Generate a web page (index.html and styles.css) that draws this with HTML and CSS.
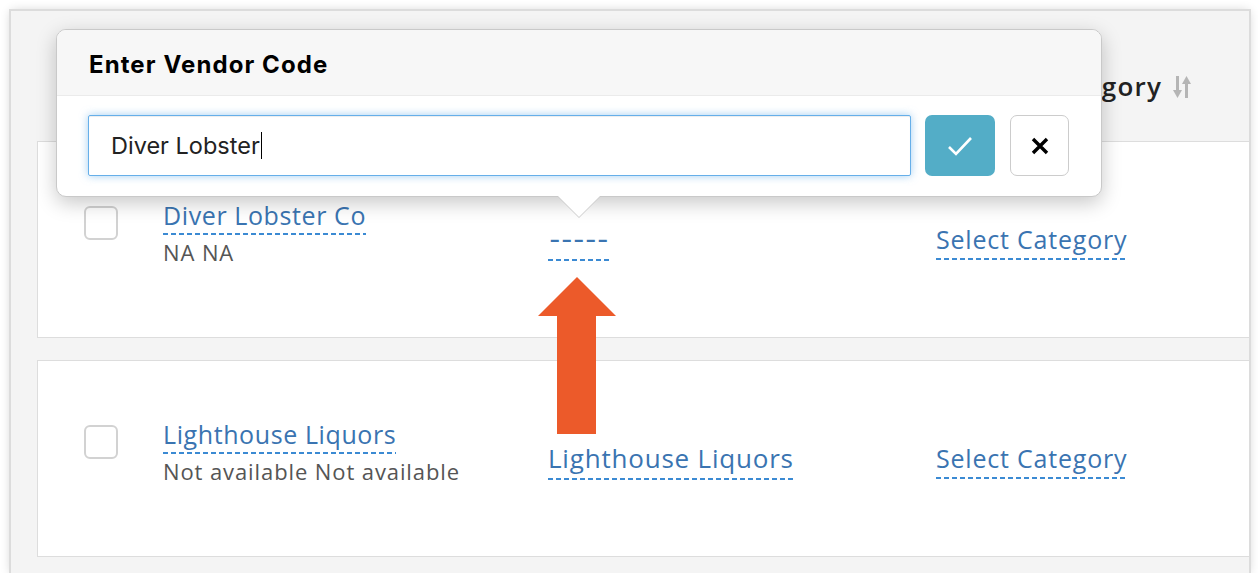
FILE: index.html
```html
<!DOCTYPE html>
<html lang="en">
<head>
  <meta charset="UTF-8">
  <meta name="viewport" content="width=device-width, initial-scale=1.0">
  <title>Vendors</title>
  <link rel="stylesheet" href="styles.css">
</head>
<body>

  <div class="frame">

    <div class="table-head">
      <div class="th-sort">
        <span>Category</span>
        <svg class="sort-icon" width="18" height="22" viewBox="0 0 18 22">
          <rect x="3" y="0" width="3" height="15" fill="#b5b5b5"/>
          <polygon points="0,14 9,14 4.5,22" fill="#b5b5b5"/>
          <rect x="12" y="7" width="3" height="15" fill="#b5b5b5"/>
          <polygon points="9,8 18,8 13.5,0" fill="#b5b5b5"/>
        </svg>
      </div>
    </div>

    <div class="row">
      <div class="col-check"><span class="checkbox"></span></div>
      <div class="col-name">
        <a class="editable title">Diver Lobster Co</a>
        <div class="sub">NA NA</div>
      </div>
      <div class="col-code"><a class="editable code empty">–––––</a></div>
      <div class="col-cat"><a class="editable cat">Select Category</a></div>
    </div>

    <div class="row">
      <div class="col-check"><span class="checkbox"></span></div>
      <div class="col-name">
        <a class="editable title">Lighthouse Liquors</a>
        <div class="sub">Not available Not available</div>
      </div>
      <div class="col-code"><a class="editable code">Lighthouse Liquors</a></div>
      <div class="col-cat"><a class="editable cat">Select Category</a></div>
    </div>

    <!-- inline edit popover for vendor code -->
    <div class="popover">
      <div class="popover-title">Enter Vendor Code</div>
      <div class="popover-body">
        <div class="vendor-input"><span>Diver Lobster</span><span class="caret"></span></div>
        <button class="btn-ok">
          <svg width="26" height="22" viewBox="0 0 26 22"><polyline points="2,12 9,19 24,3" fill="none" stroke="#fff" stroke-width="2.6"/></svg>
        </button>
        <button class="btn-cancel">
          <svg width="18" height="18" viewBox="0 0 18 18"><path d="M2 2 L16 16 M16 2 L2 16" stroke="#000" stroke-width="3.4"/></svg>
        </button>
      </div>
    </div>

    <svg class="pointer" width="78" height="157" viewBox="0 0 78 157">
      <polygon points="39,0 78,39 58,39 58,157 19,157 19,39 0,39" fill="#ec5a2a"/>
    </svg>

  </div>

</body>
</html>
```

FILE: styles.css
```css
body {
  margin: 0;
  background-color: #fff;
  font-family: 'Open Sans', 'Noto Sans', sans-serif;
  color: #333;
}

.frame {
  position: relative;
  margin: 11px 0 0 11px;
  width: 1238px;
  height: 562px;
  background-color: #f4f4f4;
  overflow: hidden;
  box-shadow: 0 0 0 2px #dcdcdc, 0 0 10px rgba(0, 0, 0, 0.2);
}

.table-head {
  height: 130px;
  box-sizing: border-box;
  display: flex;
  justify-content: flex-end;
  align-items: flex-start;
  padding: 60px 58px 0 0;
}

.th-sort {
  display: flex;
  align-items: center;
  gap: 11px;
  font-size: 26px;
  line-height: 30px;
  font-weight: 600;
  color: #222;
  letter-spacing: 1.2px;
}

.sort-icon {
  margin-top: 2px;
}

.row {
  margin-left: 26px;
  width: 1300px;
  height: 197px;
  box-sizing: border-box;
  border: 1px solid #ddd;
  background-color: #fff;
  display: grid;
  grid-template-columns: 79px 385px 388px 1fr;
  align-items: start;
  padding-left: 46px;
}

.row + .row {
  margin-top: 22px;
}

.checkbox {
  display: block;
  width: 34px;
  height: 34px;
  box-sizing: border-box;
  margin-top: 64px;
  border: 2px solid #d2d2d2;
  border-radius: 6px;
}

/* dashed underline like x-editable links */
.editable {
  display: inline-block;
  color: #3a74b1;
  letter-spacing: 0.6px;
  background-image: repeating-linear-gradient(90deg, #3b8ad3 0 5px, transparent 5px 8px);
  background-size: 100% 2px;
  background-position: left bottom;
  background-repeat: no-repeat;
  cursor: pointer;
}

.col-name {
  padding-top: 58px;
}

.title {
  font-size: 25px;
  line-height: 30px;
  padding-bottom: 5px;
}

.sub {
  margin-top: 4px;
  font-size: 22px;
  line-height: 26px;
  color: #555;
  letter-spacing: 0.9px;
}

.col-code {
  padding-top: 81px;
}

.code {
  font-size: 26px;
  line-height: 32px;
  padding-bottom: 6px;
  letter-spacing: 0.8px;
}

.code.empty {
  font-size: 19px;
  font-weight: 700;
  letter-spacing: 2.5px;
  padding-left: 2px;
}

.col-cat {
  padding-top: 82px;
}

.cat {
  font-size: 25px;
  line-height: 30px;
  padding-bottom: 6px;
  letter-spacing: 0.8px;
}

.popover {
  position: absolute;
  left: 45px;
  top: 18px;
  width: 1046px;
  box-sizing: border-box;
  background-color: #fff;
  border: 1px solid #c9c9c9;
  border-radius: 10px;
  box-shadow: 0 6px 20px rgba(0, 0, 0, 0.22);
  font-family: Inter, 'Liberation Sans', sans-serif;
}

.popover::before,
.popover::after {
  content: "";
  position: absolute;
  width: 0;
  height: 0;
  border-style: solid;
  border-color: transparent;
}

.popover::before {
  left: 500px;
  bottom: -22px;
  border-width: 22px 22px 0 22px;
  border-top-color: #c9c9c9;
}

.popover::after {
  left: 501px;
  bottom: -21px;
  border-width: 21px 21px 0 21px;
  border-top-color: #fff;
}

.popover-title {
  background-color: #f7f7f7;
  border-bottom: 1px solid #ebebeb;
  border-radius: 9px 9px 0 0;
  padding: 21px 32px 16px;
  font-size: 24px;
  line-height: 28px;
  font-weight: 700;
  letter-spacing: 1.1px;
  color: #000;
}

.popover-body {
  display: flex;
  padding: 19px 32px 20px 31px;
}

.vendor-input {
  flex: 1;
  height: 61px;
  box-sizing: border-box;
  display: flex;
  align-items: center;
  padding-left: 22px;
  border: 1px solid #66afe9;
  border-radius: 2px;
  box-shadow: inset 0 1px 1px rgba(0, 0, 0, 0.075), 0 0 8px rgba(102, 175, 233, 0.6);
  font-size: 23.5px;
  color: #222;
}

.caret {
  width: 1px;
  height: 27px;
  margin-left: 1px;
  background-color: #000;
}

.btn-ok,
.btn-cancel {
  height: 61px;
  display: flex;
  align-items: center;
  justify-content: center;
  border-radius: 7px;
  padding: 0;
}

.btn-ok {
  width: 70px;
  margin-left: 14px;
  border: none;
  background-color: #53adc7;
}

.btn-cancel {
  width: 59px;
  margin-left: 15px;
  border: 1px solid #ccc;
  background-color: #fff;
}

.pointer {
  position: absolute;
  left: 527px;
  top: 266px;
}
```
